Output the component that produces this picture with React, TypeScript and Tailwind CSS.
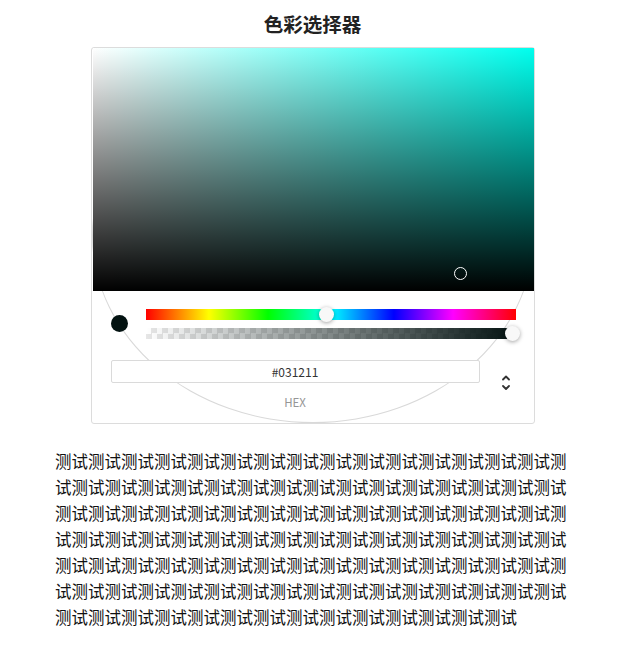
const HEX = "#031211"

const Chevrons = () => (
  <svg width="10" height="17" viewBox="0 0 10 17" fill="none">
    <path d="M2 5.5 L5 2.5 L8 5.5" stroke="#333" strokeWidth="1.8" strokeLinecap="round" strokeLinejoin="round" />
    <path d="M2 12 L5 15 L8 12" stroke="#333" strokeWidth="1.8" strokeLinecap="round" strokeLinejoin="round" />
  </svg>
)

const ColorPicker = () => {
  return (
    <div className="relative mx-auto w-[444px] h-[377px] border border-[#dcdcdc] rounded-[3px] bg-white">
      {/* the ellipse outline behind the controls */}
      <div className="absolute inset-0 rounded-[50%] border border-[#d9d9d9]"></div>
      <div className="relative flex flex-col">
        <div className="relative h-[243px] ml-px bg-[#00ffee]">
          <div className="absolute inset-0 bg-gradient-to-r from-white to-transparent"></div>
          <div className="absolute inset-0 bg-gradient-to-b from-transparent to-black"></div>
          <div className="absolute left-[361px] top-[219px] w-[13px] h-[13px] rounded-full border-[1.5px] border-white"></div>
        </div>
        <div className="flex pl-[19px] pr-[18px] pt-[18px]">
          <div className="w-[35px] flex">
            <div className="w-[17px] h-[17px] rounded-full bg-[#031211] mt-[6px]"></div>
          </div>
          <div className="flex-1 flex flex-col gap-[8px]">
            <div className="relative h-[11px] bg-[linear-gradient(to_right,#f00_0%,#ff0_17%,#0f0_33%,#0ff_50%,#00f_67%,#f0f_83%,#f00_100%)]">
              <div className="absolute left-[173px] top-[-2px] w-[15px] h-[15px] rounded-full bg-[#f8f8f8] shadow-[0_1px_4px_rgba(0,0,0,0.37)]"></div>
            </div>
            <div className="relative h-[11px] bg-[conic-gradient(#e6e6e6_25%,#ffffff_0_50%,#e6e6e6_0_75%,#ffffff_0)] bg-[length:11px_11px]">
              <div className="absolute inset-0 bg-gradient-to-r from-[rgba(3,18,17,0)] to-[#031211]"></div>
              <div className="absolute left-[359px] top-[-2px] w-[15px] h-[15px] rounded-full bg-[#f8f8f8] shadow-[0_1px_4px_rgba(0,0,0,0.37)]"></div>
            </div>
          </div>
        </div>
        <div className="flex pl-[19px] pr-[18px] pt-[21px]">
          <div className="flex-1 flex flex-col items-center">
            <div className="w-full h-[23px] border border-[#dadada] rounded-[2px] bg-white flex items-center justify-center text-[12px] text-[#333]">
              {HEX}
            </div>
            <div className="mt-[12px] text-[11.5px] leading-[14px] text-[#969696] uppercase">hex</div>
          </div>
          <div className="w-[36px] flex justify-end pr-[5px] pt-[14px]">
            <Chevrons />
          </div>
        </div>
      </div>
    </div>
  )
}

export default function App() {
  const text = "测试".repeat(107)
  return (
    <div className="w-[625px] bg-white font-['Noto_Sans_CJK_SC','Noto_Sans',sans-serif] text-[#111]">
      <div className="h-[47px] flex items-center justify-center pt-px">
        <h1 className="text-[19.5px] font-bold text-[#222]">色彩选择器</h1>
      </div>
      <ColorPicker />
      <p className="ml-[55px] w-[512px] mt-[24px] text-[16.5px] leading-[26px] break-all">{text}</p>
    </div>
  )
}
